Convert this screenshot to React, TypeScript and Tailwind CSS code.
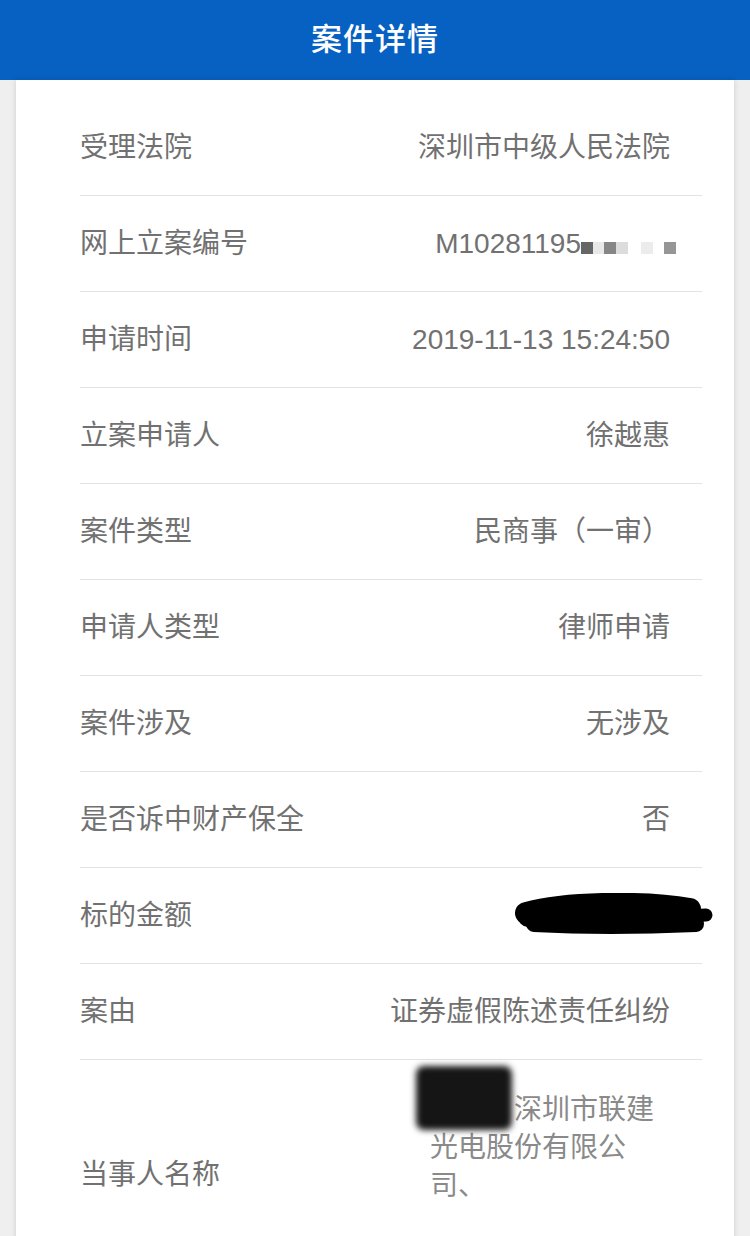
const rows: { label: string; value: string }[] = [
  { label: '受理法院', value: '深圳市中级人民法院' },
  { label: '网上立案编号', value: 'M10281195' },
  { label: '申请时间', value: '2019-11-13 15:24:50' },
  { label: '立案申请人', value: '徐越惠' },
  { label: '案件类型', value: '民商事（一审）' },
  { label: '申请人类型', value: '律师申请' },
  { label: '案件涉及', value: '无涉及' },
  { label: '是否诉中财产保全', value: '否' },
  { label: '标的金额', value: '' },
  { label: '案由', value: '证券虚假陈述责任纠纷' },
]

// mosaic squares that mask the tail of the case number
const mosaic = [
  { w: 'w-[12px]', c: 'bg-[#666666]' },
  { w: 'w-[11px]', c: 'bg-[#e8e8e8]' },
  { w: 'w-[12px]', c: 'bg-[#868686]' },
  { w: 'w-[12px]', c: 'bg-[#dcdcdc]' },
  { w: 'w-[13px]', c: 'bg-white' },
  { w: 'w-[12px]', c: 'bg-[#ececec]' },
  { w: 'w-[11px]', c: 'bg-white' },
  { w: 'w-[12px]', c: 'bg-[#969696]' },
]

function Scribble() {
  return (
    <svg width="205" height="46" viewBox="0 0 205 46" className="mr-[-45px] block">
      <g stroke="#000" strokeLinecap="round" fill="none">
        <path d="M16 20 C 60 8, 140 9, 180 16" strokeWidth="22" />
        <path d="M18 24 C 80 26, 140 25, 184 24" strokeWidth="20" />
        <path d="M24 31 C 80 34, 140 33, 186 31" strokeWidth="16" />
        <path d="M172 23 L 196 22" strokeWidth="13" />
        <path d="M150 15 L 184 16" strokeWidth="10" />
      </g>
    </svg>
  )
}

function Value({ label, value }: { label: string; value: string }) {
  if (label === '标的金额') return <Scribble />
  if (label === '网上立案编号') {
    return (
      <span className="mr-[-6px] flex items-end">
        {value}
        <span className="mb-[9px] flex h-[12px]">
          {mosaic.map((m, i) => (
            <span key={i} className={`h-[12px] ${m.w} ${m.c}`} />
          ))}
        </span>
      </span>
    )
  }
  return <span>{value}</span>
}

export default function App() {
  return (
    <div
      className="min-h-[1236px] bg-[#efefef]"
      style={{ fontFamily: '"Liberation Sans", "Noto Sans CJK SC", sans-serif' }}
    >
      <div className="flex h-[80px] items-center justify-center bg-[#0661c2]">
        <h1 className="text-[31px] font-medium tracking-[1px] text-white">案件详情</h1>
      </div>

      <div className="mx-[16px] bg-white pl-[64px] pr-[32px] pt-[20px] shadow-[0_0_6px_rgba(0,0,0,0.14)]">
        {rows.map((row) => (
          <div
            key={row.label}
            className="flex h-[96px] items-center justify-between border-b border-[#e3e3e3] pr-[32px] text-[28px] leading-[38px] text-[#717171]"
          >
            <span>{row.label}</span>
            <Value label={row.label} value={row.value} />
          </div>
        ))}

        <div className="flex h-[230px] justify-between pr-[32px] text-[28px] leading-[38px]">
          <span className="self-center text-[#717171]">当事人名称</span>
          <div className="relative mt-[31px] w-[240px] self-start text-[#8a8a8a]">
            <div className="absolute left-[-14px] top-[-25px] h-[64px] w-[96px] rounded-[8px] bg-[#151515] blur-[3px]" />
            <span>某某、深圳市联建光电股份有限公司、</span>
          </div>
        </div>
      </div>
    </div>
  )
}
